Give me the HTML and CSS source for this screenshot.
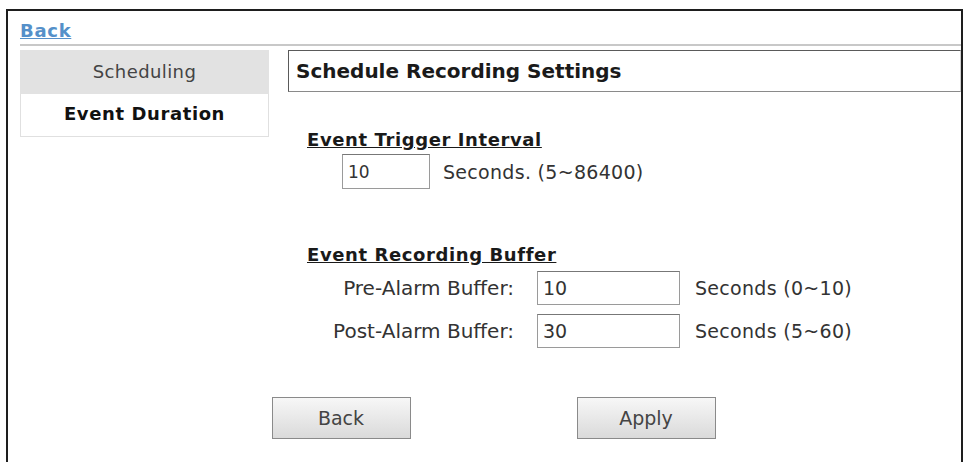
FILE: index.html
```html
<!DOCTYPE html>
<html lang="en">
<head>
  <meta charset="UTF-8" />
  <title>Schedule Recording Settings</title>
  <link rel="stylesheet" href="styles.css">
</head>
<body>
  <div class="frame">
    <div class="topbar">
      <a class="back-link" href="#">Back</a>
    </div>

    <div class="layout">
      <div class="sidebar">
        <div class="tab">Scheduling</div>
        <div class="tab active">Event Duration</div>
      </div>

      <div class="content">
        <div class="title-box">Schedule Recording Settings</div>

        <div class="section trigger">
          <div class="section-title">Event Trigger Interval</div>
          <div class="trigger-row">
            <input class="field small" type="text" value="10" />
            <span class="hint">Seconds. (5~86400)</span>
          </div>
        </div>

        <div class="section buffer">
          <div class="section-title">Event Recording Buffer</div>
          <div class="buffer-row">
            <label class="buffer-label">Pre-Alarm Buffer:</label>
            <input class="field" type="text" value="10" />
            <span class="hint">Seconds (0~10)</span>
          </div>
          <div class="buffer-row">
            <label class="buffer-label">Post-Alarm Buffer:</label>
            <input class="field" type="text" value="30" />
            <span class="hint">Seconds (5~60)</span>
          </div>
        </div>
      </div>
    </div>

    <div class="actions">
      <button class="btn">Back</button>
      <button class="btn">Apply</button>
    </div>
  </div>
</body>
</html>
```

FILE: styles.css
```css
* {
  box-sizing: border-box;
}

html, body {
  margin: 0;
  padding: 0;
  background: #fff;
  font-family: "DejaVu Sans", Verdana, sans-serif;
  color: #333;
  overflow: hidden;
}

.frame {
  margin: 9px 0 0 6px;
  width: 957px;
  height: 470px;
  border: 2px solid #1e1e1e;
  border-bottom: none;
}

.topbar {
  margin-left: 12px;
  padding-top: 10px;
  border-bottom: 2px solid #c8c8c8;
  height: 35px;
}

.back-link {
  display: block;
  line-height: 20px;
  font-size: 18px;
  font-weight: bold;
  letter-spacing: 0.7px;
  color: #5590c9;
  text-decoration: underline;
}

.layout {
  display: flex;
  margin-top: 4px;
  padding-left: 12px;
}

.sidebar {
  width: 249px;
  flex-shrink: 0;
}

.tab {
  height: 44px;
  line-height: 44px;
  text-align: center;
  font-size: 18px;
  letter-spacing: 0.4px;
  color: #444;
  background: #e2e2e2;
}

.tab.active {
  height: 43px;
  line-height: 40px;
  background: #fff;
  color: #111;
  font-weight: bold;
  letter-spacing: 0.6px;
  border: 1px solid #e0e0e0;
  border-top: none;
}

.content {
  flex: 1;
  margin-left: 19px;
}

.title-box {
  height: 42px;
  line-height: 40px;
  padding-left: 7px;
  font-size: 20px;
  font-weight: bold;
  color: #1a1a1a;
  border: 1px solid #5a5a5a;
  border-right-color: #d0d0d0;
  border-bottom-color: #8a8a8a;
}

.section-title {
  line-height: 20px;
  font-size: 18px;
  font-weight: bold;
  letter-spacing: 0.6px;
  color: #1a1a1a;
  text-decoration: underline;
}

.trigger {
  margin-top: 38px;
  padding-left: 19px;
}

.trigger-row {
  display: flex;
  align-items: center;
  margin-top: 4px;
  padding-left: 35px;
}

.field {
  width: 143px;
  height: 34px;
  border: 1px solid #9a9a9a;
  border-top-color: #777;
  padding: 0 5px;
  font-family: inherit;
  font-size: 19px;
  color: #333;
  background: #fff;
}

.field.small {
  width: 88px;
  height: 35px;
  font-size: 17px;
}

.hint {
  margin-left: 15px;
  font-size: 19px;
  letter-spacing: 0.3px;
  color: #333;
}

.trigger .hint {
  margin-left: 13px;
}

.buffer {
  margin-top: 56px;
  padding-left: 19px;
}

.buffer .section-title {
  margin-bottom: 6px;
}

.buffer-row {
  display: flex;
  align-items: center;
  margin-bottom: 9px;
}

.buffer-label {
  width: 207px;
  text-align: right;
  margin-right: 23px;
  font-size: 20px;
  color: #333;
}

.actions {
  display: flex;
  justify-content: center;
  gap: 166px;
  margin-top: 40px;
  padding-left: 18px;
}

.btn {
  width: 139px;
  height: 42px;
  font-family: inherit;
  font-size: 19px;
  color: #444;
  border: 1px solid #8a8a8a;
  background: linear-gradient(#f7f7f7, #dadada);
}
```
